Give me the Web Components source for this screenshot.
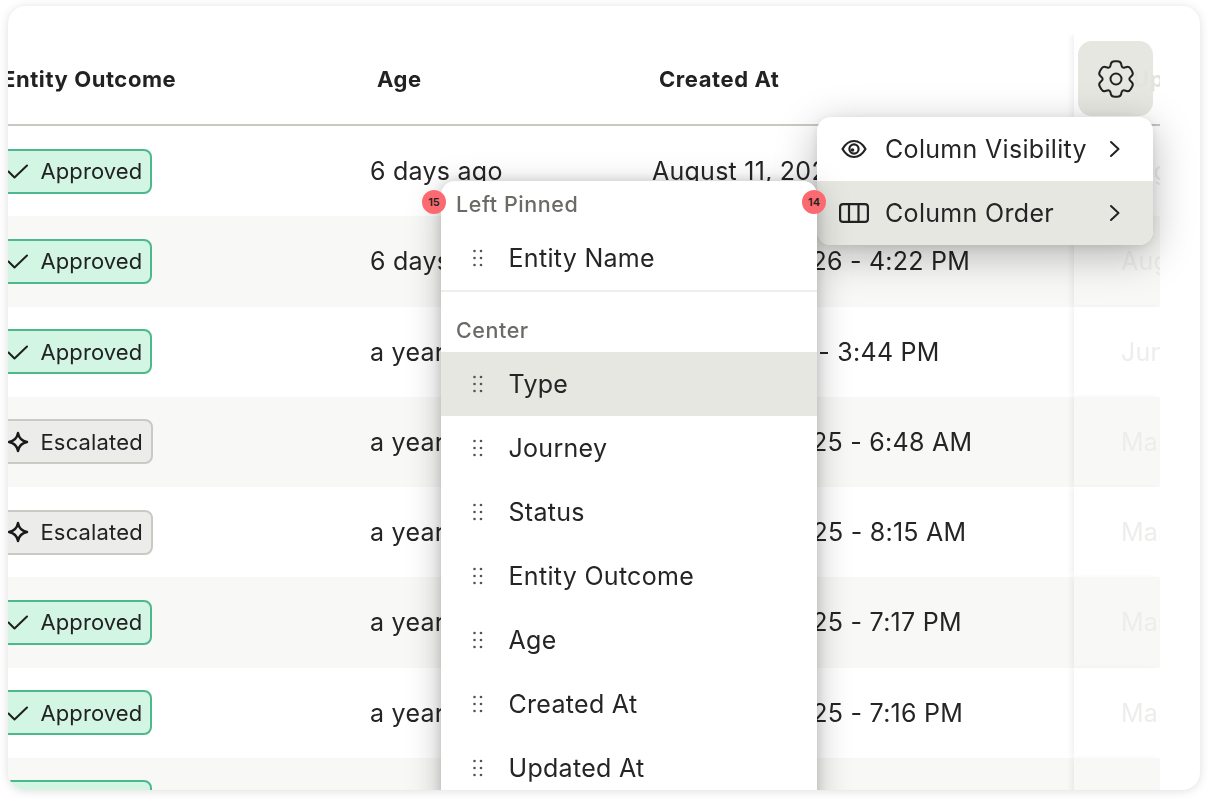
<!DOCTYPE html>
<html lang="en">
<head>
<meta charset="utf-8">
<title>Column order menu</title>
<style>
html,body{margin:0;padding:0;background:#fff;width:1208px;height:799px;overflow:hidden}
body{font-family:Inter,"Liberation Sans",sans-serif;color:#222}
x-card{filter:drop-shadow(0 1px 5px rgba(0,0,0,.13))}
x-settings-menu{box-shadow:0 10px 40px rgba(0,0,0,.28),0 2px 8px rgba(0,0,0,.08)}
x-order-panel{box-shadow:0 8px 34px rgba(0,0,0,.26),0 0 12px rgba(0,0,0,.14)}
</style>
</head>
<body>
<x-card>
  <x-data-table></x-data-table>
  <x-settings-button></x-settings-button>
  <x-settings-menu></x-settings-menu>
  <x-order-panel></x-order-panel>
  <x-pin style="left:794px;top:184px">14</x-pin>
  <x-pin style="left:414px;top:184px">15</x-pin>
</x-card>
<script>
const GRID='grid-template-columns:362px 282px 422px 86px;';
function gearPath(){
  const pts=[];const c=18;
  for(let k=0;k<6;k++){
    const t=-90+60*k;
    [[-30,12.4],[-14,18.4],[14,18.4]].forEach(([d,r])=>{
      const a=(t+d)*Math.PI/180;pts.push([c+r*Math.cos(a),c+r*Math.sin(a)]);
    });
  }
  const lerp=(a,b,u)=>[a[0]+(b[0]-a[0])*u,a[1]+(b[1]-a[1])*u];
  const f=n=>n.toFixed(2);
  const n=pts.length;let d='';
  pts.forEach((p,i)=>{
    const prev=pts[(i-1+n)%n],next=pts[(i+1)%n];
    const u=lerp(p,prev,.36),v=lerp(p,next,.36);
    d+=`${i?'L':'M'}${f(u[0])} ${f(u[1])}Q${f(p[0])} ${f(p[1])} ${f(v[0])} ${f(v[1])}`;
  });
  return d+'Z';
}
const ICONS={
 check:'<svg width="22" height="22" viewBox="0 0 22 22" fill="none" stroke="#1f1f1f" stroke-width="2" stroke-linecap="round" stroke-linejoin="round"><path d="M1.500 11.500 7.500 17.500 20 5.500"/></svg>',
 star:'<svg width="22" height="22" viewBox="0 0 22 22" fill="none" stroke="#1a1a1a" stroke-width="2.400" stroke-linejoin="round"><path d="M11 2C12 7.500 14.500 10 20 11 14.500 12 12 14.500 11 20 10 14.500 7.500 12 2 11 7.500 10 10 7.500 11 2Z"/></svg>',
 eye:'<svg width="26" height="20" viewBox="0 0 26 20" fill="none" stroke="#222" stroke-width="2.200"><path d="M1.500 10C4.500 4.800 8.500 2 13 2S21.500 4.800 24.500 10C21.500 15.200 17.500 18 13 18S4.500 15.200 1.500 10Z" stroke-linejoin="round"/><circle cx="13" cy="10" r="4.600"/><circle cx="11.500" cy="11" r="1.800" fill="#222" stroke="none"/></svg>',
 cols:'<svg width="30" height="20" viewBox="0 0 30 20" fill="none" stroke="#222" stroke-width="2.200"><rect x="1.100" y="1.100" width="27.800" height="17.800" rx="3"/><path d="M10 1V19M19.500 1V19"/></svg>',
 chev:'<svg width="12" height="18" viewBox="0 0 12 18" fill="none" stroke="#222" stroke-width="2" stroke-linecap="round" stroke-linejoin="round"><path d="M2 2 9.500 9 2 16"/></svg>',
 grip:'<svg width="10" height="18" viewBox="0 0 10 18" fill="#555"><circle cx="1.500" cy="2" r="1.300"/><circle cx="8" cy="2" r="1.300"/><circle cx="1.500" cy="9" r="1.300"/><circle cx="8" cy="9" r="1.300"/><circle cx="1.500" cy="16" r="1.300"/><circle cx="8" cy="16" r="1.300"/></svg>'
};
function define(name,css,html){
  customElements.define(name,class extends HTMLElement{
    constructor(){super();this.attachShadow({mode:'open'});}
    connectedCallback(){ this.shadowRoot.innerHTML=`<style>${css}</style>`+(typeof html==='function'?html(this):html); }
  });
}
define('x-card',`:host{display:block;position:relative;box-sizing:border-box;margin:6px 8px 0;width:1192px;height:784px;background:#fff;border-radius:18px;overflow:hidden}
.frame{display:block;padding-top:28px}`,`<div class="frame"><slot></slot></div>`);

define('x-badge',`:host{display:inline-flex;align-items:center;gap:11.500px;box-sizing:border-box;height:45px;margin-left:-14px;padding:0 8px 0 11px;border-radius:8px;border:2px solid #4db78d;background:#d3f5e3;font-size:22px;letter-spacing:.1px;color:#222}
:host([kind=esc]){border-color:#c9cac4;background:#ececeb;letter-spacing:.15px}
svg{display:block;flex:none}`,t=>{const e=t.getAttribute('kind')==='esc';return `${e?ICONS.star:ICONS.check}<span>${e?'Escalated':'Approved'}</span>`});

define('x-row',`:host{display:grid;${GRID}height:90.25px;align-items:center;font-size:25px;letter-spacing:.25px;color:#252525;background:#fff}
:host([alt]){background:#f8f8f6}
.pin{align-self:stretch;display:flex;align-items:center;padding-left:47px;overflow:hidden;white-space:nowrap;color:#ededeb;background:inherit;box-shadow:-4px 0 5px -1px rgba(60,60,50,.07);position:relative}
.t{white-space:nowrap;overflow:hidden}`,t=>`<div><x-badge kind="${t.getAttribute('kind')}"></x-badge></div><div class="t">${t.getAttribute('age')}</div><div class="t">${t.getAttribute('date')}</div><div class="pin">${t.getAttribute('upd')}</div>`);

define('x-table-head',`:host{display:grid;${GRID}height:92px;box-sizing:border-box;align-items:center;font-size:22px;font-weight:650;color:#222;border-bottom:2px solid #c9c9c4;background:#fff;letter-spacing:.58px}
.a{margin-left:-6px;white-space:nowrap;overflow:hidden}
.b{padding-left:7px}
.pin{align-self:stretch;display:flex;align-items:center;padding-left:59px;overflow:hidden;color:#e2e2df;white-space:nowrap;box-shadow:-4px 0 5px -1px rgba(60,60,50,.07);position:relative;z-index:3}`,
`<div class="a">Entity Outcome</div><div class="b">Age</div><div class="b">Created At</div><div class="pin">Updated At</div>`);

const rows=[
 ['ok','6 days ago','August 11, 2026 - 4:28 PM','August 11'],
 ['ok','6 days ago','August 11, 2026 - 4:22 PM','August 11'],
 ['ok','a year ago','June 8, 2025 - 3:44 PM','June 8'],
 ['esc','a year ago','March 23, 2025 - 6:48 AM','March 23'],
 ['esc','a year ago','March 22, 2025 - 8:15 AM','March 22'],
 ['ok','a year ago','March 20, 2025 - 7:17 PM','March 20'],
 ['ok','a year ago','March 20, 2025 - 7:16 PM','March 20'],
 ['ok','a year ago','March 10, 2025 - 5:02 PM','March 10']
];
define('x-data-table',`:host{display:block;width:1152px;height:756px;overflow:hidden}`,
 `<x-table-head></x-table-head>`+rows.map((r,i)=>`<x-row kind="${r[0]}" age="${r[1]}" date="${r[2]}" upd="${r[3]}" ${i%2?'alt':''}></x-row>`).join(''));

define('x-settings-button',`:host{position:absolute;left:1070px;top:35px;width:75px;height:75px;border-radius:14px;background:#e6e7e1;display:flex;align-items:center;justify-content:center;z-index:2}
svg{display:block}`,`<svg width="38" height="38" viewBox="-1 -1 38 38" fill="none" stroke="#222" stroke-width="2"><path d="${gearPath()}" stroke-linejoin="round"/><circle cx="18" cy="18" r="5.500"/></svg>`);

define('x-menu-item',`:host{display:flex;align-items:center;height:64px;box-sizing:border-box;padding:0 32px 0 0;font-size:25px;letter-spacing:.32px;color:#252525}
:host([active]){background:#e6e7e1}
.i{width:68px;flex:none;display:flex;align-items:center;justify-content:center;padding-left:7px;padding-right:1px;box-sizing:border-box}
.l{flex:1;white-space:nowrap}
svg{display:block}`,t=>`<span class="i">${ICONS[t.getAttribute('icon')]}</span><span class="l"><slot></slot></span>${ICONS.chev}`);

define('x-settings-menu',`:host{position:absolute;left:809px;top:111px;width:336px;height:128px;border-radius:14px;background:#fff;overflow:hidden;z-index:4;display:block}`,
 `<x-menu-item icon="eye">Column Visibility</x-menu-item><x-menu-item icon="cols" active>Column Order</x-menu-item>`);

define('x-order-item',`:host{display:flex;align-items:center;height:64px;padding-left:32px;gap:25.500px;font-size:25px;letter-spacing:.3px;color:#252525;white-space:nowrap}
:host([active]){background:#e6e7e1}
svg{display:block;flex:none}`,()=>`${ICONS.grip}<span><slot></slot></span>`);

define('x-order-panel',`:host{position:absolute;left:433px;top:175px;width:376px;height:640px;border-radius:14px 14px 0 0;background:#fff;z-index:5;display:block;overflow:hidden}
.h{font-size:21.5px;font-weight:500;color:#6a6a66;padding-left:15px;line-height:26px;letter-spacing:.55px}
.h.first{padding-top:10px;padding-bottom:9px}
.h.second{padding-top:25px;padding-bottom:9px}
hr{margin:0;border:0;border-top:2px solid #eeeeec}`,
`<div class="h first">Left Pinned</div><x-order-item>Entity Name</x-order-item><hr><div class="h second">Center</div><x-order-item active>Type</x-order-item><x-order-item>Journey</x-order-item><x-order-item>Status</x-order-item><x-order-item>Entity Outcome</x-order-item><x-order-item>Age</x-order-item><x-order-item>Created At</x-order-item><x-order-item>Updated At</x-order-item>`);

define('x-pin',`:host{position:absolute;width:24px;height:24px;border-radius:50%;background:#fb6a70;color:#222;font-size:11px;font-weight:600;display:flex;align-items:center;justify-content:center;z-index:6}`,`<slot></slot>`);
</script>
</body>
</html>
